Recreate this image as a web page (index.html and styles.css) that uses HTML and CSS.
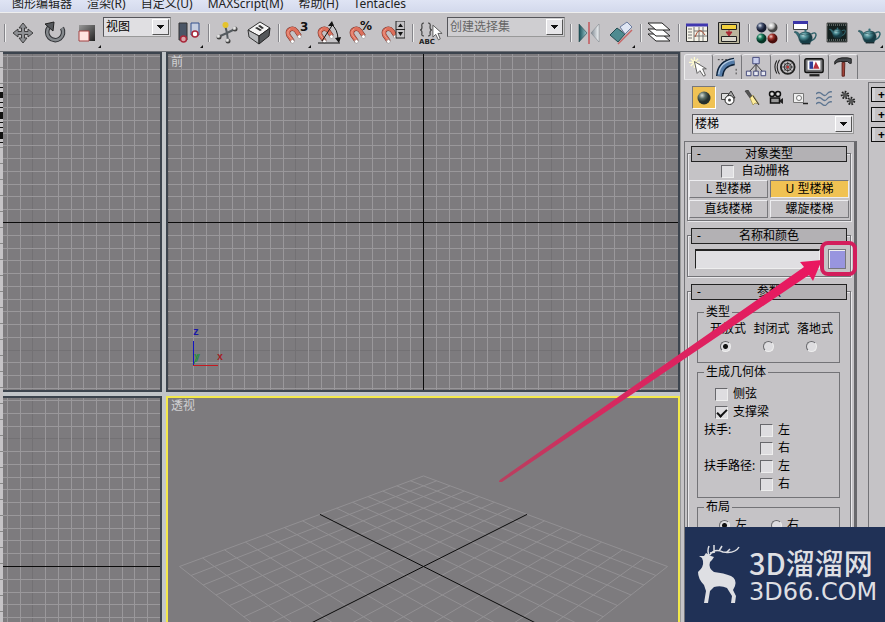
FILE: index.html
```html
<!DOCTYPE html>
<html lang="zh-CN">
<head>
<meta charset="utf-8">
<meta name="viewport" content="width=device-width, initial-scale=1">
<title>3ds Max</title>
<link rel="stylesheet" href="styles.css">
</head>
<body>
<svg class="defs" aria-hidden="true">
  <defs>
    <linearGradient id="metal" x1="0" y1="0" x2="1" y2="1"><stop offset="0" stop-color="#999"/><stop offset="1" stop-color="#222"/></linearGradient>
    <linearGradient id="steel" x1="0" x2="1"><stop offset="0" stop-color="#164d55"/><stop offset="1" stop-color="#9ecbd0"/></linearGradient>
    <linearGradient id="silver" x1="0" x2="1"><stop offset="0" stop-color="#7d8790"/><stop offset="1" stop-color="#f4f6f8"/></linearGradient>
    <radialGradient id="ball" cx=".35" cy=".3"><stop offset="0" stop-color="#d8ded6"/><stop offset=".5" stop-color="#5d7068"/><stop offset="1" stop-color="#26302d"/></radialGradient>
    <radialGradient id="navyBall" cx=".35" cy=".3"><stop offset="0" stop-color="#dde4f0"/><stop offset=".5" stop-color="#465270"/><stop offset="1" stop-color="#151b30"/></radialGradient>
    <radialGradient id="whiteBall" cx=".35" cy=".3"><stop offset="0" stop-color="#fff"/><stop offset=".6" stop-color="#bbb"/><stop offset="1" stop-color="#444"/></radialGradient>
    <radialGradient id="greenBall" cx=".35" cy=".3"><stop offset="0" stop-color="#cff0e0"/><stop offset=".5" stop-color="#1b7a5c"/><stop offset="1" stop-color="#063426"/></radialGradient>
    <radialGradient id="redBall" cx=".35" cy=".3"><stop offset="0" stop-color="#f4c9c4"/><stop offset=".5" stop-color="#9c3029"/><stop offset="1" stop-color="#4a0d0b"/></radialGradient>
    <radialGradient id="pot" cx=".35" cy=".3"><stop offset="0" stop-color="#b5dadd"/><stop offset=".5" stop-color="#4a8a92"/><stop offset="1" stop-color="#173d46"/></radialGradient>
    <symbol id="magnet" viewBox="0 0 24 24">
      <path d="M9 20 L4 13 Q2 8 6 6 Q10 4 13 8 L17 14" fill="none" stroke="#6b2a22" stroke-width="5"/>
      <path d="M9 20 L4 13 Q2 8 6 6 Q10 4 13 8 L17 14" fill="none" stroke="#dd705c" stroke-width="4"/>
      <path d="M8 18 L3.500 12 Q2 8 6 5.500" fill="none" stroke="#f2a898"/>
      <path d="M6 19.500 L9 17.500 L11 20.500 L8 22.500Z M14 14 L17 12 L19 15 L16 17Z" fill="#fff" stroke="#777" stroke-width=".5"/>
    </symbol>
    <symbol id="teapot" viewBox="0 0 24 16">
      <path d="M18 5 Q23 2 23 6 Q22 11 17 12" fill="none" stroke="#2f626a" stroke-width="1.500"/>
      <path d="M7 12 L2 4 L0 3 L1 2 L4 3 L8 7Z" fill="#376f78" stroke="#1d424a" stroke-width=".5"/>
      <path d="M7 4 Q12 1 17 4 Q21 9 17 14 Q12 16 7 14 Q3 9 7 4Z" fill="url(#pot)" stroke="#1d424a" stroke-width=".6"/>
      <path d="M7 5 Q12 7 17 5" fill="none" stroke="#1d424a" stroke-width=".6"/><circle cx="12" cy="1.500" r="1.200" fill="#376f78"/>
      <path d="M8 15 H17" stroke="#1a2c31" stroke-width="1.500"/>
    </symbol>
    <symbol id="pointer" viewBox="0 0 12 18"><path d="M1 1 V14 L4 11 L7 17 L9 16 L6.500 10 H11Z" fill="#fff" stroke="#555"/></symbol>
  </defs>
</svg>

<div class="app">
  <nav class="menubar" aria-label="主菜单">
    <a href="#">图形编辑器</a><a href="#">渲染(R)</a><a href="#">自定义(U)</a><a href="#">MAXScript(M)</a><a href="#">帮助(H)</a><a href="#">Tentacles</a>
  </nav>

  <div class="toolbar" role="toolbar" aria-label="主工具栏">
    <span class="sep"></span>
    <button class="tool" aria-label="移动"><svg viewBox="0 0 24 24"><path d="M12 2 L16 7 H13.500 V10.500 H17 V8 L22 12 L17 16 V13.500 H13.500 V17 H16 L12 22 L8 17 H10.500 V13.500 H7 V16 L2 12 L7 8 V10.500 H10.500 V7 H8Z" fill="#8e9094" stroke="#333" stroke-width=".9"/></svg></button>
    <button class="tool" aria-label="旋转"><svg viewBox="0 0 24 24"><path d="M6 6 A8 8 0 1 0 19 7" fill="none" stroke="#303236" stroke-width="4.500"/><path d="M6 6 A8 8 0 1 0 19 7" fill="none" stroke="#85898d" stroke-width="2.500"/><path d="M2 3 L11 1 L10 10Z" fill="#55585c" stroke="#222"/></svg></button>
    <button class="tool more" aria-label="缩放"><svg viewBox="0 0 24 24"><path d="M4 4 H20 V20 H4Z" fill="url(#metal)"/><path d="M4 10 H14 V20 H4Z" fill="#ffe4e1" stroke="#a34343"/></svg></button>
    <span class="combo combo-view"><select aria-label="参考坐标系"><option>视图</option></select></span>
    <button class="tool more" aria-label="轴点中心"><svg viewBox="0 0 24 24"><path d="M2 2 H10 V19 H2Z" fill="#4a5566" stroke="#333"/><path d="M14 2 H22 V14 H14Z" fill="#c6cee0" stroke="#34508c"/><circle cx="6.500" cy="18" r="3" fill="#d9a4ab" stroke="#a8283a" stroke-width="1.500"/><circle cx="18" cy="13" r="3" fill="#fff" stroke="#a8283a" stroke-width="1.500"/></svg></button>
    <span class="sep"></span>
    <button class="tool" aria-label="操纵"><svg viewBox="0 0 24 24"><path d="M10 4 L12 12 L20 8 M12 12 L3 16 M12 12 L13 20" stroke="#555b60" stroke-width="2" fill="none"/><g fill="url(#whiteBall)"><circle cx="20" cy="8" r="2.500"/><circle cx="4" cy="16" r="2.500"/><circle cx="13" cy="20" r="2.500"/></g><circle cx="10.500" cy="4" r="3" fill="#e4c32c"/></svg></button>
    <button class="tool" aria-label="快捷键覆盖"><svg viewBox="0 0 24 24"><path d="M1 9 L13 1 L23 7 L12 15Z" fill="#f4f4f4" stroke="#333"/><path d="M1 9 L12 15 V23 L2 16Z" fill="#b9bbbe" stroke="#333"/><path d="M12 15 L23 7 L22 15 L12 23Z" fill="#54575a" stroke="#222"/><path d="M8 7 L10 6 L15 9 L13 10Z M11 5 L13 4 L17 7 L15 8Z" fill="#333"/></svg></button>
    <span class="sep"></span>
    <button class="tool more" aria-label="捕捉开关"><svg viewBox="0 0 24 24"><use href="#magnet" y="3" width="21" height="21"/><text x="15" y="10" class="icon-text">3</text></svg></button>
    <button class="tool" aria-label="角度捕捉"><svg viewBox="0 0 24 24"><use href="#magnet" y="3" width="21" height="21"/><path d="M1 22 H23 M5 20 L16 3 M14 3 Q21 8 21 19" fill="none" stroke="#111"/><path d="M11 5 L15 0 L17 5Z M18 17 L24 16 L22 22Z" fill="#111"/></svg></button>
    <button class="tool" aria-label="百分比捕捉"><svg viewBox="0 0 24 24"><use href="#magnet" y="3" width="21" height="21"/><text x="11" y="9" class="icon-text">%</text></svg></button>
    <button class="tool" aria-label="微调器捕捉"><svg viewBox="0 0 24 24"><use href="#magnet" y="3" width="21" height="21"/><path d="M15 0 H24 V17 H15Z M15 8.500 H24" fill="#c5c3c6" stroke="#222"/><path d="M17 6 L19.500 2.500 L22 6Z M17 11 H22 L19.500 15Z" fill="#111"/></svg></button>
    <span class="sep"></span>
    <button class="tool" aria-label="编辑命名选择集"><svg viewBox="0 0 24 24"><path d="M5 2 Q2 2 3 6 Q3 9 1 9 Q3 9 3 12 Q2 15 5 15 M9 2 Q12 2 11 6 Q11 9 13 9 Q11 9 11 12 Q12 15 9 15" fill="none" stroke="#444" stroke-width="1.200"/><text x="0" y="23" class="abc">ABC</text><use href="#pointer" x="13" y="2" width="11" height="19"/></svg></button>
    <span class="combo combo-set"><select aria-label="命名选择集"><option>创建选择集</option></select></span>
    <span class="sep"></span>
    <button class="tool" aria-label="镜像"><svg viewBox="0 0 24 24"><path d="M2 3 L10 12 L2 21Z" fill="url(#steel)" stroke="#25494d" stroke-width=".6"/><path d="M22 3 L14 12 L22 21Z" fill="url(#silver)" stroke="#7d858c" stroke-width=".6"/><path d="M12 1 V23" stroke="#c3565a" stroke-width="1.500"/></svg></button>
    <button class="tool more" aria-label="对齐"><svg viewBox="0 0 24 24"><path d="M1 14 L8 7 L16 13 L9 21Z" fill="#4e8b90" stroke="#244b50"/><path d="M11 6 L18 1 L23 6 L16 13Z" fill="#dfe6f4" stroke="#6d7da0"/><path d="M9 23 L23 9" stroke="#c86464" stroke-width="1.500"/></svg></button>
    <span class="sep"></span>
    <button class="tool" aria-label="层管理器"><svg viewBox="0 0 24 24"><g fill="#fff" stroke="#222"><path d="M1 13 H15 L23 20 H9Z"/><path d="M1 8 H15 L23 15 H9Z"/><path d="M1 2 H15 L23 9 H9Z"/></g></svg></button>
    <span class="sep"></span>
    <button class="tool" aria-label="曲线编辑器"><svg viewBox="0 0 24 24"><path d="M1.500 3.500 H22.500 V20.500 H1.500Z" fill="#f5f3e8" stroke="#333"/><path d="M1 4 H23" stroke="#4038b0" stroke-width="3"/><path d="M3 8 H7 M3 11 H7 M3 14 H7 M3 17 H7 M9 6 V20 M14 6 V20 M18 6 V20 M9 10 H22 M9 15 H22" stroke="#777"/><path d="M10 16 Q14 4 20 14" fill="none" stroke="#a95038"/></svg></button>
    <button class="tool" aria-label="图解视图"><svg viewBox="0 0 24 24"><path d="M1.500 1.500 H22.500 V22.500 H1.500Z" fill="#bbb69c" stroke="#222"/><path d="M4.500 3.500 H19.500 V8.500 H4.500Z" fill="#f2d13c" stroke="#222"/><path d="M4.500 15.500 H19.500 V20.500 H4.500Z" fill="#d8d6ca" stroke="#222"/><path d="M12 9 V12 M9 11 H15 L12 15Z" fill="#a92835" stroke="#a92835"/></svg></button>
    <span class="sep"></span>
    <button class="tool" aria-label="材质编辑器"><svg viewBox="0 0 24 24"><circle cx="6.500" cy="6.500" r="5" fill="url(#navyBall)"/><circle cx="17.500" cy="6.500" r="5" fill="url(#whiteBall)"/><circle cx="6.500" cy="17.500" r="5" fill="url(#greenBall)"/><circle cx="17.500" cy="17.500" r="5" fill="url(#redBall)"/></svg></button>
    <span class="sep"></span>
    <button class="tool" aria-label="渲染设置"><svg viewBox="0 0 24 24"><path d="M.5 .5 H14.500 V8.500 H.5Z" fill="#fff" stroke="#444"/><path d="M0 1.500 H15" stroke="#3b35a8" stroke-width="3"/><use href="#teapot" x="1" y="8" width="23" height="16"/></svg></button>
    <button class="tool" aria-label="渲染帧窗口"><svg viewBox="0 0 24 24"><path d="M2 2 H22 V21 H2Z" fill="#14201f" stroke="#555"/><path d="M2 4 H22 M2 19 H22" stroke="#999" stroke-dasharray="1 1"/><use href="#teapot" x="4" y="6" width="17" height="12"/></svg></button>
    <button class="tool more" aria-label="渲染产品"><svg viewBox="0 0 24 24"><use href="#teapot" x="1" y="7" width="23" height="16"/></svg></button>
  </div>

  <div class="workspace">
    <div class="track" aria-hidden="true"></div>
    <main class="viewports">
      <section class="viewport vp-side"><svg viewBox="3 54 157 336" preserveAspectRatio="xMidYMid slice" data-grid="160,222"></svg></section>
      <section class="viewport">
        <svg viewBox="168 54 510 336" preserveAspectRatio="xMidYMid slice" data-grid="423,222">
          <g fill="none"><path d="M193.500 341 V365" stroke="#1414c4"/><path d="M193 365.500 H218" stroke="#c41a20"/><path d="M194 364 L198 354" stroke="#2a8b45"/></g>
          <text x="193" y="335" class="axis" fill="#1717a8">z</text><text x="194" y="360" class="axis" fill="#2a8b45">y</text><text x="217" y="360" class="axis" fill="#a51d22">x</text>
        </svg>
        <h2 class="vp-name">前</h2>
      </section>
      <section class="viewport vp-side"><svg viewBox="3 398 157 224" preserveAspectRatio="xMidYMid slice" data-grid="160,566"></svg></section>
      <section class="viewport active">
        <svg id="perspective" viewBox="168 398 510 224" preserveAspectRatio="xMidYMid slice"></svg>
        <h2 class="vp-name">透视</h2>
      </section>
    </main>

    <aside class="panel">
      <div class="tabs" role="tablist">
        <button class="tab on" role="tab" aria-label="创建"><svg viewBox="0 0 24 24"><path d="M7 1 V13 M1 7 H13 M3 3 L11 11 M11 3 L3 11" stroke="#fffbd0" stroke-width="1.500"/><path d="M7 6 L10 19 L13 16 L17 22 L19 21 L16 14 L20 14Z" fill="#fff" stroke="#555"/></svg></button>
        <button class="tab" role="tab" aria-label="修改"><svg viewBox="0 0 24 24"><path d="M4 22 Q5 8 20 6" fill="none" stroke="#0d2138" stroke-width="8"/><path d="M4 22 Q5 8 20 6" fill="none" stroke="#557ca8" stroke-width="5"/><path d="M3 20 Q4 7 20 4" fill="none" stroke="#b4cae2" stroke-width="1.500"/><path d="M2 4 H12 M22 14 V22" stroke="#333" stroke-dasharray="2 2"/></svg></button>
        <button class="tab" role="tab" aria-label="层次"><svg viewBox="0 0 24 24"><path d="M12 7 V18 M12 9 L4 18 M12 9 L20 18" stroke="#333"/><path d="M8.500 1.500 H15.500 V8.500 H8.500Z" fill="#c7cdeb" stroke="#3c4276"/><path d="M1.500 16.500 H6.500 V21.500 H1.500Z M9.500 16.500 H14.500 V21.500 H9.500Z M17.500 16.500 H22.500 V21.500 H17.500Z" fill="#e6e8f0" stroke="#3c4276"/></svg></button>
        <button class="tab" role="tab" aria-label="运动"><svg viewBox="0 0 24 24"><g fill="none" stroke="#222"><circle cx="15" cy="12" r="7.500" stroke-width="2"/><circle cx="15" cy="12" r="4"/><path d="M15 6 V18 M9 12 H21 M11 8 L19 16 M19 8 L11 16" stroke-width=".8"/><path d="M6 4 Q1 12 6 20 M3 5 Q-1 12 3 19" stroke-width="1.200"/></g><circle cx="15" cy="12" r="1.500" fill="#b33"/></svg></button>
        <button class="tab" role="tab" aria-label="显示"><svg viewBox="0 0 24 24"><rect x="2" y="3" width="20" height="15" rx="2" fill="#747477" stroke="#111" stroke-width="1.500"/><path d="M5 5 H19 V15 H5Z" fill="#fff"/><path d="M7 6 H11 V14 H7Z" fill="#2f3f98"/><path d="M11 14 L14 6 L18 14Z" fill="#b72f3c"/><path d="M7 21 H18" stroke="#222" stroke-width="2.500"/></svg></button>
        <button class="tab" role="tab" aria-label="工具"><svg viewBox="0 0 24 24"><path d="M11 7 H14 L13.500 22 H11Z" fill="#a24238" stroke="#5a201a"/><path d="M3 6 Q6 2 11 2 H17 L21 3 V8 H19 L17 6 H9 Q5 6 3 9Z" fill="#45484c" stroke="#1a1a1a"/></svg></button>
      </div>

      <div class="panel-body">
        <div class="command">
          <div class="cats">
            <button class="cat on" aria-label="几何体"><svg viewBox="0 0 16 16"><circle cx="8" cy="8" r="6.500" fill="url(#ball)"/></svg></button>
            <button class="cat" aria-label="图形"><svg viewBox="0 0 16 16"><path d="M1.500 3.500 H8.500 V9.500 H1.500Z" fill="#ddd" stroke="#444"/><path d="M6 8 L11 1 L15 8Z" fill="#aaa" stroke="#333"/><circle cx="9.500" cy="10" r="4.500" fill="#fff" stroke="#222"/><circle cx="9.500" cy="10" r="1.500" fill="#444"/></svg></button>
            <button class="cat" aria-label="灯光"><svg viewBox="0 0 16 16"><path d="M1 1 L4 0 L8 6 L6 8Z" fill="#555" stroke="#222" stroke-width=".5"/><path d="M6 8 L9 5 L15 14 L11 13 L9 15Z" fill="#ffee9b" stroke="#8c7b35" stroke-width=".6"/><path d="M9 6 L15 15" stroke="#333"/></svg></button>
            <button class="cat" aria-label="摄影机"><svg viewBox="0 0 16 16"><circle cx="4" cy="4" r="2.500" fill="#ddd" stroke="#111" stroke-width="1.500"/><circle cx="10" cy="4" r="2.500" fill="#ddd" stroke="#111" stroke-width="1.500"/><path d="M2.500 8 H11.500 V13 H2.500Z" fill="#999" stroke="#111" stroke-width="1.500"/><path d="M12 10 L15 8 V14 L12 12Z" fill="#222"/></svg></button>
            <button class="cat" aria-label="辅助对象"><svg viewBox="0 0 16 16"><path d="M1.500 3.500 H11.500 V12.500 H1.500Z" fill="#eee" stroke="#777"/><circle cx="7" cy="8" r="2.500" fill="#fff" stroke="#777"/><path d="M11 13.500 H16" stroke="#222" stroke-width="1.500"/></svg></button>
            <button class="cat" aria-label="空间扭曲"><svg viewBox="0 0 16 16"><path d="M0 4 Q3 1 6 4 T11 4 T16 2 M0 9 Q3 6 6 9 T11 9 T16 7 M0 14 Q3 11 6 14 T11 14 T16 12" fill="none" stroke="#5d7591" stroke-width="1.300"/></svg></button>
            <button class="cat" aria-label="系统"><svg viewBox="0 0 16 16"><g fill="none" stroke="#222"><circle cx="5" cy="5" r="3" stroke-width="2.500" stroke-dasharray="1.500 1.200"/><circle cx="11" cy="11" r="3" stroke-width="2.500" stroke-dasharray="1.500 1.200"/></g><circle cx="5" cy="5" r="2.500" fill="#555"/><circle cx="11" cy="11" r="2.500" fill="#555"/></svg></button>
          </div>
          <span class="combo combo-type"><select aria-label="对象类别"><option>楼梯</option></select></span>

          <div class="rollouts">
            <section class="rollout">
              <button class="head"><span>-</span>对象类型</button>
              <label class="autogrid"><input type="checkbox">自动栅格</label>
              <div class="types">
                <button>L 型楼梯</button><button class="on">U 型楼梯</button>
                <button>直线楼梯</button><button>螺旋楼梯</button>
              </div>
            </section>
            <section class="rollout">
              <button class="head"><span>-</span>名称和颜色</button>
              <div class="name-row"><input type="text" aria-label="名称"><button class="swatch" aria-label="对象颜色"></button></div>
            </section>
            <section class="rollout">
              <button class="head"><span>-</span>参数</button>
              <div class="groups">
                <fieldset>
                  <legend>类型</legend>
                  <div class="kinds">
                    <label>开放式<input type="radio" name="kind" checked></label>
                    <label>封闭式<input type="radio" name="kind"></label>
                    <label>落地式<input type="radio" name="kind"></label>
                  </div>
                </fieldset>
                <fieldset>
                  <legend>生成几何体</legend>
                  <div class="geo">
                    <label class="wide"><input type="checkbox">侧弦</label>
                    <label class="wide"><input type="checkbox" checked>支撑梁</label>
                    <span>扶手:</span><label><input type="checkbox">左</label>
                    <label class="second"><input type="checkbox">右</label>
                    <span>扶手路径:</span><label><input type="checkbox">左</label>
                    <label class="second"><input type="checkbox">右</label>
                  </div>
                </fieldset>
                <fieldset>
                  <legend>布局</legend>
                  <div class="layout-row">
                    <label><input type="radio" name="side" checked>左</label>
                    <label><input type="radio" name="side">右</label>
                  </div>
                </fieldset>
              </div>
            </section>
          </div>
        </div>
        <div class="strip"><button>+</button><button>+</button><button>+</button></div>
      </div>
    </aside>
  </div>

  <svg class="callout" viewBox="495 230 390 260" aria-hidden="true">
    <defs><linearGradient id="tail" x1="0" y1="1" x2="1" y2="0"><stop offset="0" stop-color="#b8405f"/><stop offset=".3" stop-color="#d42a5f"/><stop offset="1" stop-color="#ea1760"/></linearGradient></defs>
    <path d="M499 482 Q499 480 501 479 L804 267 L800 262 L822 260 L813 281 L809 275 L502 482Z" fill="url(#tail)"/>
    <rect x="822" y="243" width="33" height="31" rx="6" fill="none" stroke="#d31d5c" stroke-width="4"/>
  </svg>

  <div class="brand">
    <svg viewBox="0 0 44 60" aria-hidden="true">
      <path d="M5 13 L2 11 L7 11 L9 8 L14 11 L17 12 L15 15 L13 17 Q11 23 17 27 Q27 28 34 31 Q40 34 38 41 L36 45 L39 51 L38 58 H34 L35 51 L30 43 Q24 40 17 42 L13 46 L11 58 H7 L9 46 L7 40 Q1 34 1 27 Q7 22 6 16Z" fill="#dedfe3"/>
      <path d="M12 10 Q10 6 12 1 M13 10 Q17 3 26 7 Q38 9 42 2 M17 6 L17 0 M22 6 L25 1 M29 8 L33 4 M13 8 L18 7" fill="none" stroke="#dedfe3" stroke-width="1.500"/>
    </svg>
    <div><strong>3D溜溜网</strong><span>3D66.COM</span></div>
  </div>
</div>
<script src="viewports.js"></script>
</body>
</html>
```
FILE: styles.css
```css
* { box-sizing: border-box; }
:root { --face: #c5c3c6; --dark: #737377; --light: #e9e8eb; }
body {
  margin: 0;
  background: var(--face);
  color: #000;
  font: 12px/16px "Noto Sans", "Noto Sans CJK SC", sans-serif;
}
button, input, select { font: inherit; color: inherit; margin: 0; padding: 0; border-radius: 0; }
button { background: none; border: 0; white-space: nowrap; }
.defs { position: absolute; width: 0; height: 0; }
.app { position: relative; display: flex; flex-direction: column; height: 100vh; overflow: hidden; }

.menubar {
  display: flex; flex: none; align-items: flex-end; gap: 15px;
  height: 12px; padding-left: 12px; overflow: hidden;
  background: linear-gradient(#dfe4f4, #d3d9ec);
}
.menubar a { color: #222; text-decoration: none; white-space: nowrap; }

.toolbar {
  display: flex; flex: none; height: 40px; padding: 4px 0 0 1px;
  border-top: 1px solid #eee; border-bottom: 1px solid #6d7076;
}
.tool { position: relative; flex: none; width: 32px; height: 32px; }
.tool svg { display: block; width: 24px; height: 24px; margin: auto; }
.tool.more::after {
  content: ""; position: absolute; right: 2px; bottom: 1px;
  border: solid #111; border-width: 0 0 3px 3px; border-left-color: transparent;
}
.sep { flex: none; width: 6px; height: 18px; margin-top: 7px; border-left: 3px solid transparent; background: linear-gradient(90deg, #85858a 1px, #eee 1px, #eee 2px, transparent 2px) content-box; }
.icon-text { font: bold 12px "DejaVu Sans", sans-serif; fill: #111; }
.abc { font: bold 7px "DejaVu Sans", sans-serif; fill: #222; }

.combo { position: relative; display: block; flex: none; height: 20px; }
.combo select {
  appearance: none; display: block; width: 100%; height: 100%; padding-left: 2px;
  background: #e0dfe2; border: 1px solid; border-color: #55555a #999 #999 #55555a;
  outline: 0;
}
.combo::after {
  content: ""; position: absolute; top: 2px; right: 2px; bottom: 2px; width: 15px;
  border: 1px solid; border-color: #fff #555 #555 #fff; pointer-events: none;
  background: linear-gradient(#111, #111) center 5px / 7px 1px no-repeat, linear-gradient(#111, #111) center 6px / 5px 1px no-repeat, linear-gradient(#111, #111) center 7px / 3px 1px no-repeat, linear-gradient(#111, #111) center 8px / 1px 1px no-repeat, #e6e5e8;
}
.combo-view { width: 68px; margin-right: 2px; }
.combo-set { width: 118px; margin-right: 2px; }
.combo-set select { background: #cfced1; color: #666; }
.combo-type { margin: 5px 3px 0 8px; }

.workspace { display: flex; flex: 1; min-height: 0; }
.track {
  flex: none; width: 3px;
  background: linear-gradient(#111, #111) 0 40px / 3px 5px no-repeat, linear-gradient(#111, #111) 0 61px / 3px 6px no-repeat, linear-gradient(#111, #111) 0 80px / 3px 7px no-repeat, repeating-linear-gradient(#111 0 1px, #c5c3c6 1px 5px) 0 35px / 3px 56px no-repeat, repeating-linear-gradient(#c5c3c6 0 15px, #888 15px 16px);
}
.viewports {
  display: grid; flex: 1; min-width: 0; gap: 4px;
  grid-template-columns: minmax(0, 159fr) minmax(0, 514fr);
  grid-template-rows: minmax(0, 340fr) minmax(0, 226fr);
  background: #c2c6ca;
}
.viewport { position: relative; overflow: hidden; background: #7d7b7e; border: 2px solid #3c444e; }
.vp-side { border-left: 0; }
.viewport:nth-child(n+3) { border-bottom: 0; }
.viewport.active { border-color: #f2e84a; }
.viewport svg { display: block; width: 100%; height: 100%; }
.vp-name { position: absolute; top: 0; left: 3px; margin: 0; font-size: 12px; font-weight: 400; line-height: 16px; color: #d0d0d2; }
.minor { stroke: #9a989b; }
.major { stroke: #737174; }
.origin { stroke: #0b0b0b; }
.floor { stroke: #929093; fill: none; }
.axis { font: bold 10px "Liberation Mono", monospace; }

.panel { display: flex; flex: none; flex-direction: column; width: 205px; padding: 2px 0 0 3px; border-left: 1px solid #999; }
.tabs { display: flex; flex: none; height: 26px; border-bottom: 1px solid #e5e4e7; }
.tab { width: 29px; border-top: 1px solid #ededf0; border-right: 1px solid #77777b; border-radius: 3px 3px 0 0; }
.tab.on { background: #d2d0d3; border-left: 1px solid #eee; }
.tab svg { display: block; width: 22px; height: 22px; margin: auto; }
.panel-body { display: flex; flex: 1; min-height: 0; }
.command { display: flex; flex: 1; flex-direction: column; min-width: 0; padding-top: 6px; }
.cats { display: flex; padding-left: 8px; }
.cat { flex: none; width: 24px; height: 23px; }
.cat svg { display: block; width: 16px; height: 16px; margin: auto; }
.cat.on { background: #f0c253; border: 1px solid; border-color: #77777b #fff #fff #77777b; }
.strip { flex: none; width: 17px; margin: 2px 0 0 11px; padding: 4px 0 0 2px; border-left: 1px solid var(--dark); border-top: 1px solid var(--dark); overflow: hidden; }
.strip button { display: block; width: 20px; height: 15px; margin-bottom: 5px; padding-left: 6px; border: 1px solid #111; font-weight: 700; line-height: 12px; text-align: left; box-shadow: inset 3px 0 #d5d4d7; }

.rollouts {
  flex: 1; min-height: 0; margin-top: 7px; padding: 4px 3px 0 2px; overflow: hidden;
  border-top: 1px solid var(--dark); border-left: 1px solid var(--dark); border-right: 3px solid #68686c;
}
.rollout { position: relative; padding: 0 4px 3px; margin-bottom: 7px; }
.rollout::before {
  content: ""; position: absolute; inset: 7px 0 0; pointer-events: none;
  border: 1px solid var(--dark); box-shadow: inset 1px 1px var(--light), 1px 1px var(--light);
}
.head { position: relative; display: block; width: 100%; height: 16px; background: #b3b1b4; border: 1px solid #222; line-height: 14px; }
.head span { position: absolute; left: 5px; }
input[type="checkbox"], input[type="radio"] {
  appearance: none; flex: none; width: 13px; height: 13px; background: #dedde0;
  border: 1px solid; border-color: #68686c #eee #eee #68686c;
}
input[type="checkbox"]:checked::after { content: ""; display: block; width: 8px; height: 4px; margin: 2px 1px; border: solid #111; border-width: 0 0 2px 2px; rotate: -45deg; }
input[type="radio"] { width: 11px; height: 11px; border-radius: 50%; }
input[type="radio"]:checked { background: radial-gradient(circle, #111 0 2px, #dedde0 3px); }
.autogrid { position: relative; display: flex; align-items: center; justify-content: center; gap: 7px; height: 18px; padding-right: 27px; }
.types { position: relative; display: grid; grid-template-columns: 1fr 1fr; gap: 2px; margin: 0 -2px; }
.types button { height: 18px; line-height: 16px; border: 1px solid; border-color: #ededf0 #77777b #77777b #ededf0; }
.types .on { background: #f0c253; border-color: #77777b #ededf0 #ededf0 #77777b; }
.name-row { position: relative; display: flex; gap: 8px; padding: 5px 1px 5px 4px; }
.name-row input { flex: 1; min-width: 0; height: 20px; background: #e0dfe2; border: 1px solid; border-color: #222 #eee #eee #222; border-top-width: 2px; }
.swatch { width: 18px; height: 20px; background: #9895df; border: 1px solid #77777b; box-shadow: inset 1px 1px #eee; }

.groups { position: relative; display: grid; gap: 1px; padding: 4px 7px 0 6px; }
fieldset { min-width: 0; margin: 0; padding: 0 0 0 6px; border: 1px solid var(--dark); }
legend { padding: 0 2px; line-height: 16px; }
.kinds { display: flex; justify-content: space-between; padding: 1px 6px 10px; }
.kinds label { display: flex; flex-direction: column; align-items: center; gap: 4px; line-height: 16px; }
.kinds input { margin-right: 6px; }
.geo { display: grid; grid-template-columns: 56px 1fr; grid-auto-rows: 18px; align-items: center; padding: 5px 0 4px; white-space: nowrap; }
.geo label, .layout-row label { display: flex; align-items: center; gap: 5px; }
.geo .wide { grid-column: 1 / -1; padding-left: 11px; }
.geo .second { grid-column: 2; }
.layout-row { display: flex; gap: 24px; padding: 2px 0 90px 15px; }

.callout { position: absolute; top: 230px; right: 0; width: 390px; height: 260px; pointer-events: none; }
.brand {
  position: absolute; right: 0; bottom: 0; display: flex; align-items: center; gap: 8px;
  width: 200px; height: 95px; padding-left: 12px; background: #203156; color: #dedfe3;
}
.brand svg { width: 44px; height: 60px; }
.brand strong { display: block; font: 500 29px/34px "Noto Sans CJK SC", sans-serif; }
.brand span { display: block; font: 24px/26px "DejaVu Sans", sans-serif; }
```
FILE: viewports.js
```js
const NS = "http://www.w3.org/2000/svg";
function line(svg, x1, y1, x2, y2, cls) {
  const el = document.createElementNS(NS, "path");
  el.setAttribute("d", `M${x1} ${y1} L${x2} ${y2}`);
  el.setAttribute("class", cls);
  svg.prepend(el);
}

// Orthographic grids: every tenth line is a major one, the origin is black.
const PITCH = 12.76;
document.querySelectorAll("[data-grid]").forEach((svg) => {
  const [ox, oy] = svg.dataset.grid.split(",").map(Number);
  const box = svg.viewBox.baseVal;
  const right = box.x + box.width, bottom = box.y + box.height;
  const kind = (i) => (i === 0 ? "origin" : i % 10 === 0 ? "major" : "minor");
  for (const wanted of ["origin", "minor", "major"]) {
    for (let i = -40; i <= 40; i++) {
      if (kind(i) !== wanted) continue;
      const x = Math.round(ox + i * PITCH) + 0.5;
      const y = Math.round(oy + i * PITCH) + 0.5;
      if (x > box.x && x < right) line(svg, x, box.y, x, bottom, wanted);
      if (y > box.y && y < bottom) line(svg, box.x, y, right, y, wanted);
    }
  }
});

// Perspective floor, u and v running from -1 to 1.
const floor = document.getElementById("perspective");
function project(u, v) {
  const w = 1 - 0.178 * (u + v);
  return [423.5 + (122 * (u - v)) / w, 566.5 + (61.4 * (u + v)) / w];
}
const HALF = 7;
line(floor, ...project(-1, 0), ...project(1, 0), "origin");
line(floor, ...project(0, -1), ...project(0, 1), "origin");
for (let i = -HALF; i <= HALF; i++) {
  if (i === 0) continue;
  line(floor, ...project(-1, i / HALF), ...project(1, i / HALF), "floor");
  line(floor, ...project(i / HALF, -1), ...project(i / HALF, 1), "floor");
}
```
